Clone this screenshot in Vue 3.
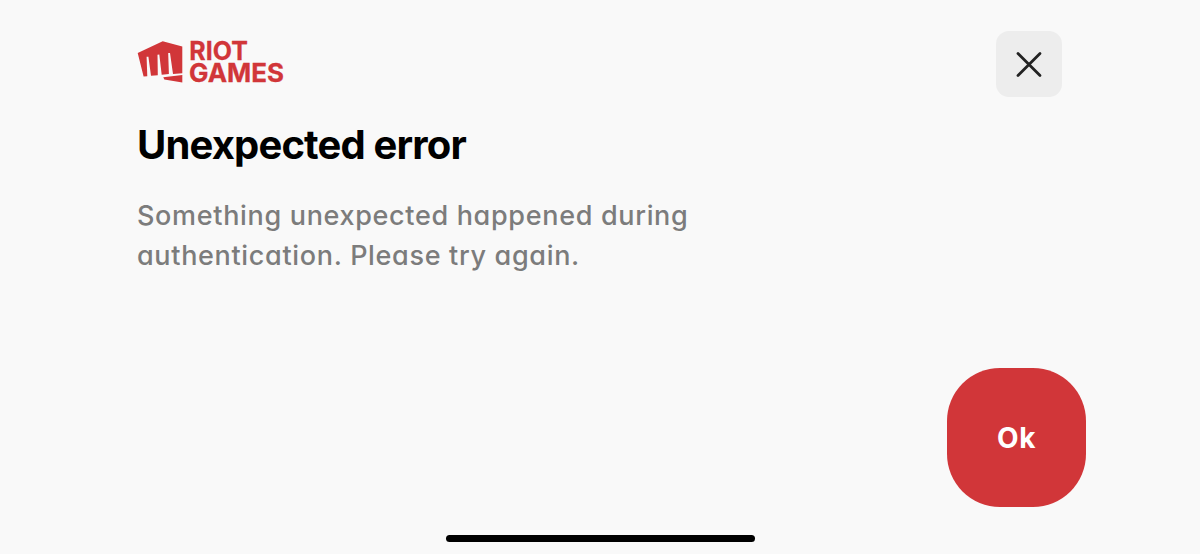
<script setup>
const message = ['Something unexpected happened during', 'authentication. Please try again.']
</script>

<template>
  <main class="screen">
    <header class="header">
      <svg class="logo" width="150" height="46" viewBox="136 39 150 46" role="img" aria-label="Riot Games">
        <path d="M137.7 53 162.7 41.3 182.3 46.4V73.3L173 73.9 170 53 168.2 53 168.9 74.1 161.7 74.8 159.3 54.6 157.5 54.7 157.8 75.2 151 75.8 148.4 56.7 146.6 56.8 147.3 76.2 143.6 76.6Z" />
        <path d="M163.3 77.2 182.3 74.9V82.5L164.3 79.6Z" />
        <text x="189.3" y="60" textLength="58.5" lengthAdjust="spacingAndGlyphs">RIOT</text>
        <text x="189" y="82.2" textLength="95" lengthAdjust="spacingAndGlyphs">GAMES</text>
      </svg>
      <button class="close" aria-label="Close">
        <svg width="28" height="28" viewBox="0 0 28 28"><path d="M3 3.5 25 25.5M25 3.5 3 25.5" /></svg>
      </button>
    </header>
    <h1 class="title">Unexpected error</h1>
    <p class="message"><span v-for="line in message" :key="line" class="line">{{ line }}</span></p>
    <button class="ok">Ok</button>
    <div class="home"></div>
  </main>
</template>

<style>
body { background: #f9f9f9; }
</style>

<style scoped>
.screen {
  box-sizing: border-box;
  display: flex;
  flex-direction: column;
  width: 1200px;
  height: 554px;
  padding: 31px 114px 12px 138px;
  overflow: hidden;
  background: #f9f9f9;
  font-family: Inter, "Liberation Sans", sans-serif;
  font-feature-settings: "cv11" 1;
}
.header {
  display: flex;
  justify-content: space-between;
  height: 66px;
  margin-right: 24px;
}
.logo { margin: 8px 0 0 -2px; fill: #d13639; overflow: visible; }
.logo text { font: 700 25.5px Inter, sans-serif; stroke: #d13639; stroke-width: 0.3; }
button { border: 0; padding: 0; font-family: inherit; font-feature-settings: inherit; }
.close {
  display: flex;
  align-items: center;
  justify-content: center;
  width: 66px;
  height: 66px;
  border-radius: 13px;
  background: #ededed;
}
.close path { fill: none; stroke: #222; stroke-width: 2.8; stroke-linecap: round; }
.title {
  margin: 23px 0 0 -1px;
  font-size: 40px;
  font-weight: 700;
  line-height: 50px;
  letter-spacing: -0.84px;
  white-space: nowrap;
  color: #000;
}
.message {
  margin: 26px 0 0 -1px;
  font-size: 27px;
  font-weight: 500;
  line-height: 40px;
  letter-spacing: 0.67px;
  color: #7c7c7c;
}
.line { display: block; white-space: nowrap; }
.ok {
  align-self: flex-end;
  width: 139px;
  height: 139px;
  margin-top: 92px;
  border-radius: 53px;
  background: #d13639;
  color: #fff;
  font-size: 28px;
  font-weight: 700;
  letter-spacing: 0.5px;
}
.home {
  width: 309px;
  height: 7px;
  margin: auto 0 0 308px;
  border-radius: 4px;
  background: #000;
}
</style>
